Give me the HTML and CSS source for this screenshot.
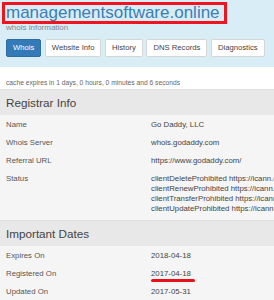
FILE: index.html
```html
<!DOCTYPE html>
<html lang="en">
<head>
    <meta charset="UTF-8">
    <meta name="viewport" content="width=device-width, initial-scale=1.0">
    <title>managementsoftware.online - whois information</title>
    <link rel="stylesheet" href="styles.css">
</head>
<body>
    <div class="header">
        <h1 class="domain">managementsoftware.online</h1>
        <div class="subtitle">whois information</div>
        <div class="tabs">
            <a class="tab active">Whois</a>
            <a class="tab">Website Info</a>
            <a class="tab">History</a>
            <a class="tab">DNS Records</a>
            <a class="tab">Diagnostics</a>
        </div>
    </div>

    <div class="cache">cache expires in 1 days, 0 hours, 0 minutes and 6 seconds</div>

    <div class="section">
        <div class="section-title">Registrar Info</div>
        <div class="rows">
            <div class="row"><div class="label">Name</div><div class="value">Go Daddy, LLC</div></div>
            <div class="row"><div class="label">Whois Server</div><div class="value">whois.godaddy.com</div></div>
            <div class="row"><div class="label">Referral URL</div><div class="value">https://www.godaddy.com/</div></div>
            <div class="row status">
                <div class="label">Status</div>
                <div class="value">
                    clientDeleteProhibited https://icann.org/epp#clientDeleteProhibited<br>
                    clientRenewProhibited https://icann.org/epp#clientRenewProhibited<br>
                    clientTransferProhibited https://icann.org/epp#clientTransferProhibited<br>
                    clientUpdateProhibited https://icann.org/epp#clientUpdateProhibited
                </div>
            </div>
        </div>
    </div>

    <div class="section">
        <div class="section-title">Important Dates</div>
        <div class="rows">
            <div class="row"><div class="label">Expires On</div><div class="value">2018-04-18</div></div>
            <div class="row"><div class="label">Registered On</div><div class="value"><span class="marked">2017-04-18</span></div></div>
            <div class="row"><div class="label">Updated On</div><div class="value">2017-05-31</div></div>
        </div>
    </div>
</body>
</html>
```

FILE: styles.css
```css
html, body {
    overflow: hidden;
}
body {
    margin: 0;
    font-family: "Liberation Sans", Arial, sans-serif;
    color: #444;
    background: #fff;
}
.header {
    background: #d9edf7;
    padding: 2px 6px 10px;
}
.domain {
    display: inline-block;
    margin: 0 0 0 -4px;
    padding: 0 4px 0 1px;
    border: 3px solid #f0141e;
    font-size: 17px;
    line-height: 16px;
    font-weight: normal;
    color: #3b7db5;
}
.subtitle {
    margin-top: 0;
    font-size: 8px;
    line-height: 8px;
    color: #888;
}
.tabs {
    display: flex;
    gap: 3.5px;
    margin-top: 7px;
}
.tab {
    display: block;
    padding: 0 6px;
    font-size: 7.7px;
    line-height: 16px;
    color: #444;
    background: #fff;
    border: 1px solid #d6d6d6;
    border-radius: 2px;
}
.tab.active {
    background: #337ab7;
    border-color: #2e6da4;
    color: #fff;
}
.cache {
    padding: 12px 6px 0;
    font-size: 6.7px;
    line-height: 8px;
    color: #666;
    height: 10px;
}
.section-title {
    background: #e8e8e8;
    border-top: 1px solid #e0e0e0;
    padding-left: 6px;
    font-size: 11.7px;
    line-height: 25px;
    color: #444;
}
.rows {
    background: #f5f5f5;
    padding-bottom: 2px;
}
.row {
    display: grid;
    grid-template-columns: 145px minmax(0, 1fr);
    padding: 4.5px 0 3.5px 6px;
    font-size: 7.8px;
    line-height: 10px;
}
.row.status .value {
    line-height: 10.3px;
}
.label {
    color: #555;
}
.value {
    color: #444;
    white-space: nowrap;
}
.marked {
    position: relative;
}
.marked::after {
    content: "";
    position: absolute;
    left: 0;
    right: -4px;
    bottom: -4px;
    height: 2.5px;
    border-radius: 2px;
    background: #e8101a;
}
```
